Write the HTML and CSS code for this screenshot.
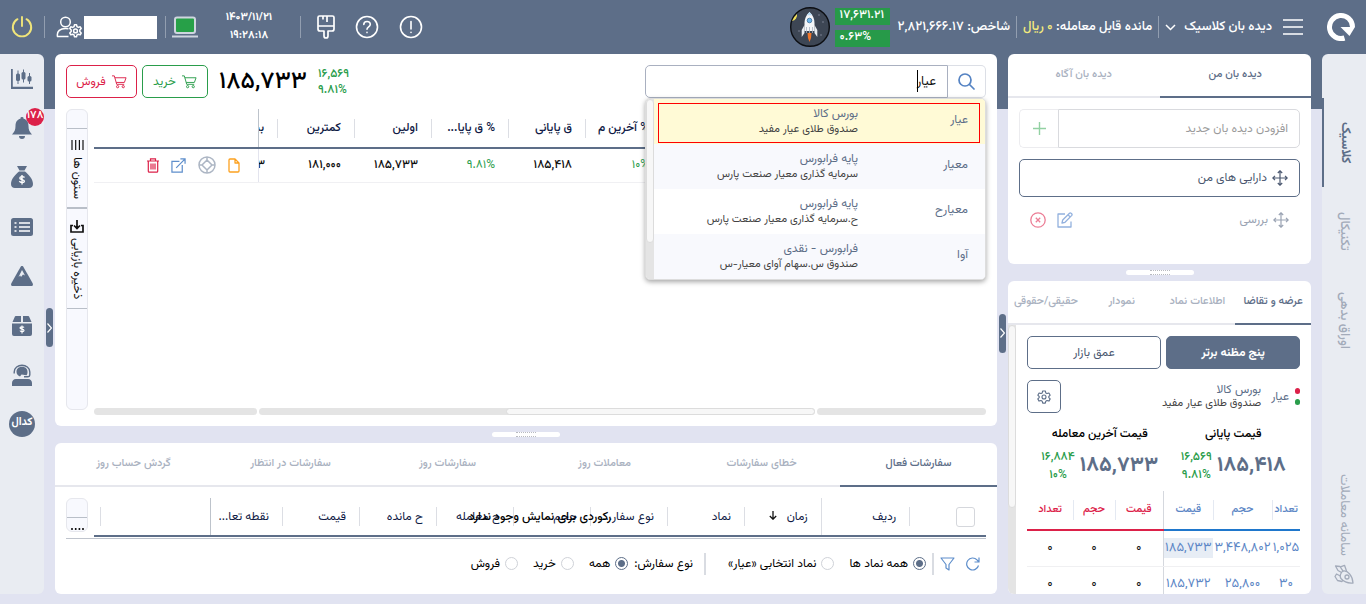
FILE: index.html
```html
<!DOCTYPE html>
<html lang="fa" dir="rtl">
<head>
<meta charset="utf-8">
<meta name="viewport" content="width=device-width, initial-scale=1">
<title>دیده بان کلاسیک</title>
<link rel="stylesheet" href="styles.css">
</head>
<body>
<header class="topbar">
  <svg class="logo" viewBox="0 0 28 28" width="28" height="28" aria-hidden="true"><path d="M25.500 14A11.500 11.500 0 1 0 17.500 25" fill="none" stroke="#fff" stroke-width="5"/><path d="M13.500 14H28l-5.500 9-4-4z" fill="#fff"/></svg>
  <button class="icon-btn menu-btn" aria-label="منو"><svg width="20" height="18" viewBox="0 0 20 18"><path d="M0 2h20M0 9h20M0 16h20" stroke="#fff" stroke-width="1.6"/></svg></button>
  <button class="view-select">دیده بان کلاسیک <svg width="11" height="7" viewBox="0 0 11 7"><path d="M1 1l4.500 4.500L10 1" fill="none" stroke="#fff" stroke-width="1.500"/></svg></button>
  <span class="vline"></span>
  <span class="top-text">مانده قابل معامله: <b class="gold">۰ ریال</b></span>
  <span class="vline"></span>
  <span class="top-text">شاخص: ۲,۸۲۱,۶۶۶.۱۷</span>
  <div class="index-badges"><span>۱۷,۶۳۱.۲۱</span><span>۰.۶۳%</span></div>
  <svg class="rocket-badge" width="40" height="40" viewBox="0 0 40 40" aria-hidden="true"><circle cx="20" cy="20" r="19.300" fill="#3d4654" stroke="#0c0e12" stroke-width="1.400"/><path d="M2 14a18 18 0 0 1 5-7 6 6 0 0 1-5 7z" fill="#f3e25b"/><g fill="#8d97a8"><circle cx="29" cy="8" r=".7"/><circle cx="33" cy="15" r=".7"/><circle cx="9" cy="24" r=".7"/><circle cx="31" cy="28" r=".7"/></g><path d="M19.500 5c-3.500 3-5 7-5 11v8h10v-8c0-4-1.500-8-5-11z" fill="#f4f6f8"/><path d="M19.500 5l-2.700 3.200h5.400z" fill="#b9dcf5"/><circle cx="19.500" cy="13.500" r="2.300" fill="#6fb7ea" stroke="#3b6f9b" stroke-width=".8"/><path d="M14.500 18l-2.800 5v7l2.800-4zM24.500 18l2.800 5v7l-2.800-4z" fill="#e8ebef"/><path d="M16.500 20v6M19.500 20v6M22.500 20v6" stroke="#a8b2c0" stroke-width=".8"/><path d="M17.500 26h4l-.5 5-1.500 4-1.500-4z" fill="#f0762a"/></svg>
  <span class="grow"></span>
  <button class="icon-btn" aria-label="هشدار"><svg width="24" height="24" viewBox="0 0 24 24" fill="none" stroke="#fff" stroke-width="1.600" stroke-linecap="round"><circle cx="12" cy="12" r="10.500"/><path d="M12 6.500v7.500M12 17.300v.2"/></svg></button>
  <button class="icon-btn help-btn" aria-label="راهنما"><svg width="24" height="24" viewBox="0 0 24 24" fill="none" stroke="#fff" stroke-width="1.600" stroke-linecap="round"><circle cx="12" cy="12" r="10.500"/><path d="M8.800 9.500c0-4 6.500-4 6.500-.2 0 2.600-3.300 2.400-3.300 4.900M12 17.400v.2"/></svg></button>
  <button class="icon-btn brush-btn" aria-label="پوسته"><svg width="18" height="24" viewBox="0 0 18 24" fill="none" stroke="#fff" stroke-width="1.700" stroke-linejoin="round"><path d="M2.500 1h13a1.500 1.500 0 0 1 1.500 1.500V14a2 2 0 0 1-2 2h-4v5a2 2 0 0 1-4 0v-5H3a2 2 0 0 1-2-2V2.500A1.500 1.500 0 0 1 2.500 1zM1 11h16M6 1v3.500M10 1v6"/></svg></button>
  <span class="vline"></span>
  <time class="clock"><span>۱۴۰۳/۱۱/۲۱</span><span>۱۹:۲۸:۱۸</span></time>
  <svg class="laptop" width="26" height="22" viewBox="0 0 26 22" aria-hidden="true"><rect x="3" y="1.500" width="20" height="15.500" rx="2" fill="#27a048" stroke="#cfd5df" stroke-width="2"/><path d="M0 20.500h26" stroke="#cfd5df" stroke-width="2"/></svg>
  <span class="vline"></span>
  <div class="account"><span class="name-plate"></span><button class="icon-btn" aria-label="حساب کاربری"><svg width="26" height="22" viewBox="0 0 26 22" fill="none" stroke="#fff" stroke-width="1.500" stroke-linejoin="round"><circle cx="9.500" cy="6" r="4.800"/><path d="M12.500 20.500H1.500c-1-5.500 3-8 8-8 1.300 0 2.200.1 3 .4"/><path d="M18.500 8.700h2l.5 2 1.300.7 1.900-.6 1 1.700-1.400 1.500v1.600l1.400 1.500-1 1.700-1.900-.6-1.300.7-.5 1.900h-2l-.5-1.900-1.300-.7-1.900.6-1-1.700 1.400-1.500V14l-1.400-1.500 1-1.700 1.900.6 1.300-.7z"/><circle cx="19.500" cy="14.900" r="1.900"/></svg></button></div>
  <span class="vline"></span>
  <button class="icon-btn power-btn" aria-label="خروج"><svg width="22" height="22" viewBox="0 0 22 22" fill="none" stroke="#f0e57a" stroke-width="1.900" stroke-linecap="round"><path d="M11 1v9M6.500 3.200a9.200 9.200 0 1 0 9 0"/></svg></button>
</header>

<div class="workspace">
  <nav class="mode-rail" aria-label="نماها">
    <a href="#" class="mode active">کلاسیک</a>
    <a href="#" class="mode">تکنیکال</a>
    <a href="#" class="mode">اوراق بدهی</a>
    <a href="#" class="mode system"><span>سامانه معاملات</span><svg width="20" height="20" viewBox="0 0 20 20" fill="none" stroke="#a3abba" stroke-width="1.300" stroke-linejoin="round"><path d="M19 19c-5 .5-9-1-12-4.500C5.500 12.500 6.500 8 9.500 7c4-.5 9 4 9.500 12z"/><circle cx="13" cy="13" r="2"/><path d="M9 7.200L6 2.500 1.500 2l2.500 4.500 3.500 2M6.300 12L2.500 10 1 12.500l2.500 4 4.500 1 1-1.500M6.500 2.800l4-1.500 2 5.700"/></svg></a>
  </nav>

  <aside class="watch-column">
    <section class="panel watch-panel">
      <div class="tabs"><button class="tab active">دیده بان من</button><button class="tab">دیده بان آگاه</button></div>
      <div class="watch-body">
        <div class="add-watch"><input type="text" placeholder="افزودن دیده بان جدید" aria-label="افزودن دیده بان جدید"><button aria-label="افزودن"><svg width="13" height="13" viewBox="0 0 13 13"><path d="M6.500 0v13M0 6.500h13" stroke="#93d1a3" stroke-width="1.400"/></svg></button></div>
        <div class="watch-item selected"><svg class="move" width="16" height="16" viewBox="0 0 16 16"><path d="M8 1v14M1 8h14M5.800 3L8 .8 10.200 3M5.800 13L8 15.200l2.200-2.200M3 5.800L.8 8 3 10.200M13 5.800L15.200 8 13 10.200"/></svg><span>دارایی های من</span></div>
        <div class="watch-item"><svg class="move" width="16" height="16" viewBox="0 0 16 16"><path d="M8 1v14M1 8h14M5.800 3L8 .8 10.200 3M5.800 13L8 15.200l2.200-2.200M3 5.800L.8 8 3 10.200M13 5.800L15.200 8 13 10.200"/></svg><span>بررسی</span><span class="grow"></span>
          <button class="icon-btn" aria-label="ویرایش"><svg width="16" height="16" viewBox="0 0 16 16" fill="none" stroke="#93b1de" stroke-width="1.300" stroke-linejoin="round"><path d="M8 2H1v13h13V9.500M5 11l.7-3L12.500 1.200c1-1 3.300 1 2.300 2.200L8 10.300zM11 2.800l2.300 2.300"/></svg></button>
          <button class="icon-btn" aria-label="حذف"><svg width="16" height="16" viewBox="0 0 16 16" fill="none" stroke="#ec7e96" stroke-width="1.300"><circle cx="8" cy="8" r="7.200"/><path d="M5.800 5.800l4.400 4.400M10.200 5.800l-4.400 4.400"/></svg></button></div>
      </div>
    </section>
    <div class="splitter"><span></span></div>
    <section class="panel depth-panel">
      <div class="tabs"><button class="tab active">عرضه و تقاضا</button><button class="tab">اطلاعات نماد</button><button class="tab">نمودار</button><button class="tab">حقیقی/حقوقی</button></div>
      <div class="depth-scroll">
        <div class="depth-body">
          <div class="depth-modes"><button class="mode-btn filled">پنج مظنه برتر</button><button class="mode-btn">عمق بازار</button></div>
          <div class="symbol-row">
            <span class="dots"><i class="dot-red"></i><i class="dot-green"></i></span>
            <span class="symbol">عیار</span>
            <span class="symbol-name"><span>بورس کالا</span><span class="fund">صندوق طلای عیار مفید</span></span>
            <span class="grow"></span>
            <button class="gear-btn" aria-label="تنظیمات"><svg width="14" height="14" viewBox="0 0 14 14" fill="none" stroke="#5d6e88" stroke-width="1.100" stroke-linejoin="round"><path d="M5.700 1h2.600l.5 1.900 1.200.7 1.900-.6 1.300 2.200L11.800 6.500v1.100l1.400 1.300-1.300 2.200-1.900-.6-1.200.7-.5 1.900H5.700l-.5-1.900-1.200-.7-1.900.6L.8 8.900l1.400-1.300V6.500L.8 5.200 2.100 3l1.900.6 1.200-.7z"/><circle cx="7" cy="7" r="2"/></svg></button>
          </div>
          <div class="prices">
            <div class="price-cell"><h3>قیمت پایانی</h3><div><strong>۱۸۵,۴۱۸</strong><span class="delta"><span>۱۶,۵۶۹</span><span>۹.۸۱%</span></span></div></div>
            <div class="price-cell"><h3>قیمت آخرین معامله</h3><div><strong>۱۸۵,۷۳۳</strong><span class="delta"><span>۱۶,۸۸۴</span><span>۱۰%</span></span></div></div>
          </div>
          <div class="books">
            <table class="book buy">
              <colgroup><col class="c-count"><col class="c-vol"><col></colgroup>
              <thead><tr><th>تعداد</th><th>حجم</th><th>قیمت</th></tr></thead>
              <tbody><tr><td>۱,۰۲۵</td><td>۳,۴۴۸,۸۰۲</td><td><mark>۱۸۵,۷۳۳</mark></td></tr><tr><td>۳۰</td><td>۲۵,۸۰۰</td><td>۱۸۵,۷۳۲</td></tr></tbody>
            </table>
            <table class="book sell">
              <colgroup><col class="c-price"><col class="c-svol"><col></colgroup>
              <thead><tr><th>قیمت</th><th>حجم</th><th>تعداد</th></tr></thead>
              <tbody><tr><td>۰</td><td>۰</td><td>۰</td></tr><tr><td>۰</td><td>۰</td><td>۰</td></tr></tbody>
            </table>
          </div>
        </div>
        <div class="vscroll"><span></span></div>
      </div>
    </section>
  </aside>

  <div class="gutter low"><button class="fold" aria-label="جمع کردن ستون"><svg width="5" height="10" viewBox="0 0 5 10"><path d="M.5.5l4 4.500-4 4.500" fill="none" stroke="#fff" stroke-width="1.200"/></svg></button></div>

  <main class="center">
    <section class="panel market">
      <div class="market-bar">
        <div class="search">
          <button class="search-btn" aria-label="جستجو"><svg width="17" height="17" viewBox="0 0 17 17" fill="none" stroke="#5583c3" stroke-width="1.700" stroke-linecap="round"><circle cx="7" cy="7" r="6"/><path d="M11.500 11.500l4.500 4.500"/></svg></button>
          <input type="text" value="عیار" aria-label="جستجوی نماد"><span class="caret"></span>
          <div class="suggest">
            <ul>
              <li class="hot"><span>عیار</span><span class="about"><em>بورس کالا</em><small>صندوق طلای عیار مفید</small></span></li>
              <li><span>معیار</span><span class="about"><em>پایه فرابورس</em><small>سرمایه گذاری معیار صنعت پارس</small></span></li>
              <li><span>معیارح</span><span class="about"><em>پایه فرابورس</em><small>ح.سرمایه گذاری معیار صنعت پارس</small></span></li>
              <li><span>آوا</span><span class="about"><em>فرابورس - نقدی</em><small>صندوق س.سهام آوای معیار-س</small></span></li>
            </ul>
            <div class="vscroll"><span></span></div>
          </div>
        </div>
        <span class="grow"></span>
        <span class="delta"><span>۱۶,۵۶۹</span><span>۹.۸۱%</span></span>
        <strong class="last-price">۱۸۵,۷۳۳</strong>
        <button class="trade buy-btn"><svg width="15" height="15" viewBox="0 0 16 15" fill="none" stroke="currentColor" stroke-width="1"><path d="M0 1.500h2.500L5 10.500h8M3 3.500h12l-1.800 5H4.500"/><circle cx="6" cy="13" r="1.200"/><circle cx="12" cy="13" r="1.200"/></svg>خرید</button>
        <button class="trade sell-btn"><svg width="15" height="15" viewBox="0 0 16 15" fill="none" stroke="currentColor" stroke-width="1"><path d="M0 1.500h2.500L5 10.500h8M3 3.500h12l-1.800 5H4.500"/><circle cx="6" cy="13" r="1.200"/><circle cx="12" cy="13" r="1.200"/></svg>فروش</button>
      </div>
      <div class="grid-area">
        <div class="grid-main">
          <table class="quotes">
            <colgroup><col class="q-pin"><col><col><col><col><col><col><col><col class="q-cut"><col class="q-act"></colgroup>
            <thead><tr><th></th><th></th><th></th><th><span>% آخرین م</span></th><th><span>ق پایانی</span></th><th><span>% ق پایا...</span></th><th><span>اولین</span></th><th><span>کمترین</span></th><th class="cut"><span>بیشترین</span></th><th class="pin"></th></tr></thead>
            <tbody><tr><td></td><td></td><td></td><td class="up"><span>۱۰%</span></td><td><span>۱۸۵,۴۱۸</span></td><td class="up"><span>۹.۸۱%</span></td><td><span>۱۸۵,۷۳۳</span></td><td><span>۱۸۱,۰۰۰</span></td><td class="cut"><span>۱۸۵,۷۳۳</span></td>
              <td class="pin"><div class="row-actions">
                <button class="icon-btn" aria-label="یادداشت"><svg width="12" height="15" viewBox="0 0 12 15" fill="none" stroke="#fca120" stroke-width="1.300" stroke-linejoin="round"><path d="M2 1h5l4 4v8a1 1 0 0 1-1 1H2a1 1 0 0 1-1-1V2a1 1 0 0 1 1-1zM7 1v4h4"/></svg></button>
                <button class="icon-btn" aria-label="پرتفوی"><svg width="18" height="18" viewBox="0 0 18 18" fill="none" stroke="#adb6c4" stroke-width="1.500"><circle cx="9" cy="9" r="8"/><path d="M9 4l5 5-5 5-5-5zM9 1v3M9 14v3M1 9h3M14 9h3"/></svg></button>
                <button class="icon-btn" aria-label="باز کردن"><svg width="15" height="15" viewBox="0 0 16 16" fill="none" stroke="#5e8ecb" stroke-width="1.300"><path d="M9 3.500H1V15h11V7.500M5.500 10.500L14.500 1.500M10 1h5v5"/></svg></button>
                <button class="icon-btn" aria-label="حذف نماد"><svg width="12" height="15" viewBox="0 0 12 15" fill="none" stroke="#dc2149" stroke-width="1.200"><path d="M0 3h12M3.500 3V.8h5V3M1.300 3v10.200c0 .6.400 1 1 1h7.400c.6 0 1-.4 1-1V3M4 5.500v6M6 5.500v6M8 5.500v6"/></svg></button>
              </div></td></tr></tbody>
          </table>
          <div class="hscroll"><span class="h-pin"></span><span class="h-mid"><i></i></span><span class="h-act"></span></div>
        </div>
        <div class="tool-rail">
          <button class="tool-btn cols-btn"><svg width="13" height="10" viewBox="0 0 13 10"><path d="M1 0v10M4.700 0v10M8.400 0v10M12 0v10" stroke="#111" stroke-width="1.200"/></svg><span>ستون ها</span></button>
          <button class="tool-btn save-btn"><svg width="14" height="13" viewBox="0 0 14 13" fill="none" stroke="#111" stroke-width="1.700"><path d="M3 5.500H1V12h12V5.500h-2M7 0v8M4 5.500l3 3 3-3"/></svg><span>ذخیره بازیابی</span></button>
        </div>
      </div>
    </section>
    <div class="splitter"><span></span></div>
    <section class="panel orders">
      <div class="tabs"><button class="tab active">سفارشات فعال</button><button class="tab">خطای سفارشات</button><button class="tab">معاملات روز</button><button class="tab">سفارشات روز</button><button class="tab">سفارشات در انتظار</button><button class="tab">گردش حساب روز</button></div>
      <div class="orders-grid">
        <div class="orders-main">
          <table class="quotes order-table">
            <colgroup><col><col class="o-row"><col><col><col><col><col><col><col><col class="o-cut"><col class="o-act"></colgroup>
            <thead><tr><th class="check"><input type="checkbox" aria-label="انتخاب همه"></th><th class="pin-right"><span>ردیف</span></th><th><span>زمان <svg width="8" height="9" viewBox="0 0 8 9" fill="none" stroke="#111" stroke-width="1.300"><path d="M4 0v8M.8 5l3.200 3.200L7.200 5"/></svg></span></th><th><span>نماد</span></th><th><span>نوع سفار...</span></th><th><span>حجم</span></th><th><span>ح معامله</span></th><th><span>ح مانده</span></th><th><span>قیمت</span></th><th class="cut"><span>نقطه تعا...</span></th><th class="pin act"></th></tr></thead>
          </table>
          <p class="empty-note">رکوردی برای نمایش وجود ندارد</p>
        </div>
        <div class="tool-rail mini"><button class="tool-btn" aria-label="ستون ها"><svg width="13" height="2" viewBox="0 0 13 2"><path d="M1 0v2M4.700 0v2M8.400 0v2M12 0v2" stroke="#111" stroke-width="1.600"/></svg></button></div>
      </div>
      <form class="filters">
        <button type="button" class="icon-btn" aria-label="بازخوانی"><svg width="14" height="14" viewBox="0 0 14 14" fill="none" stroke="#5e8ecb" stroke-width="1.200"><path d="M12.500 8.500A6 6 0 1 1 11 2.800L13 5M13 .5V5H8.500"/></svg></button>
        <button type="button" class="icon-btn" aria-label="فیلتر"><svg width="15" height="14" viewBox="0 0 15 14" fill="none" stroke="#5e8ecb" stroke-width="1.200" stroke-linejoin="round"><path d="M1 1h13L9 7.500V13l-3-2V7.500z"/></svg></button>
        <span class="sep"></span>
        <label><input type="radio" name="scope" checked>همه نماد ها</label>
        <label class="second"><input type="radio" name="scope">نماد انتخابی «عیار»</label>
        <span class="sep wide"></span>
        <span>نوع سفارش:</span>
        <label><input type="radio" name="side" checked>همه</label>
        <label class="second"><input type="radio" name="side">خرید</label>
        <label class="second"><input type="radio" name="side">فروش</label>
      </form>
    </section>
  </main>

  <div class="gutter"><button class="fold" aria-label="باز کردن منو"><svg width="5" height="10" viewBox="0 0 5 10"><path d="M.5.5l4 4.500-4 4.500" fill="none" stroke="#fff" stroke-width="1.200"/></svg></button></div>

  <nav class="icon-rail" aria-label="ابزارها">
    <div class="rail-items">
      <a href="#" aria-label="نمودار"><svg width="22" height="20" viewBox="0 0 22 20" fill="#5d6e88"><path d="M0 0h1.800v17.800H22V20H0z"/><rect x="5" y="4.500" width="4" height="7.500" rx="1.500"/><rect x="10.500" y="3" width="4" height="7.500" rx="1.500"/><rect x="16.500" y="7" width="4" height="5.500" rx="1.500"/><path d="M6.500 1.500h1v13.500h-1zM12 .5h1v13h-1zM18 4h1v11h-1z"/></svg></a>
      <a href="#" aria-label="پیام ها" class="bell"><svg width="20" height="22" viewBox="0 0 20 22" fill="#5d6e88"><path d="M10 0a1.500 1.500 0 0 1 1.500 1.800C15 2.500 16.500 5.500 16.500 9c0 4 1 5.500 3.500 8.500H0C2.500 14.500 3.500 13 3.500 9c0-3.500 1.500-6.500 5-7.200A1.500 1.500 0 0 1 10 0zM7 19h6a3 3 0 0 1-6 0z"/></svg><b>۱۷۸</b></a>
      <a href="#" aria-label="سرمایه"><svg width="22" height="22" viewBox="0 0 22 22"><path d="M6 0h10l-2.500 4.500h-5zM8 5.500h6c4 3.500 8 7.500 8 12.500 0 2.500-1.500 4-4 4H4c-2.500 0-4-1.500-4-4C0 13 4 9 8 5.500z" fill="#5d6e88"/><path d="M13.500 11.500c-.5-1-4.500-1.500-4.700.5-.2 2 4.700 1.200 4.600 3.200-.1 1.900-4.200 1.800-5-.1M11 9v9.500" fill="none" stroke="#fff" stroke-width="1.400"/></svg></a>
      <a href="#" aria-label="فهرست"><svg width="22" height="18" viewBox="0 0 22 18"><rect width="22" height="18" rx="2.500" fill="#5d6e88"/><path d="M3.500 5h2M8 5h11M3.500 9h2M8 9h11M3.500 13h2M8 13h11" stroke="#fff" stroke-width="1.500"/></svg></a>
      <a href="#" aria-label="قله"><svg width="22" height="20" viewBox="0 0 22 20"><path d="M11 0c.8 0 1.200.5 1.600 1.200L21.500 17c1 1.800.2 3-1.500 3H2c-1.700 0-2.500-1.200-1.500-3L9.400 1.200C9.800.5 10.200 0 11 0z" fill="#5d6e88"/><path d="M11 4l3 5.500-2-1-2 2.500-.8-1.500L7.500 11z" fill="#e9ecf2"/></svg></a>
      <a href="#" aria-label="بسته"><svg width="20" height="20" viewBox="0 0 20 20"><path d="M4 0h5v6H.5L2.500 1.500C2.800.5 3.200 0 4 0zM11 0h5c.8 0 1.200.5 1.500 1.500l2 4.500H11zM0 7.500h20V18a2 2 0 0 1-2 2H2a2 2 0 0 1-2-2z" fill="#5d6e88"/><path d="M12 11.500c-.5-1-4-1-4 .5s4 .9 4 2.400-3.500 1.500-4 .2M10 9.500v8" fill="none" stroke="#fff" stroke-width="1.200"/></svg></a>
      <a href="#" aria-label="پشتیبانی"><svg width="20" height="22" viewBox="0 0 20 22"><path d="M2.200 9.500V8c0-9 15.600-9 15.600 0v3c0 1-.8 1.700-1.800 1.700H12" fill="none" stroke="#5d6e88" stroke-width="1.400"/><path d="M10 2.800c3.500 0 5.500 2.200 5.500 5.200 0 1.500-.4 2.600-1 3.300l-5-.8-1.500 2C6 11.700 4.500 10 4.500 8c0-3 2-5.200 5.500-5.200zM4 15h12c2.500 0 4 2 4 4v3H0v-3c0-2 1.500-4 4-4z" fill="#5d6e88"/></svg></a>
      <a href="#" class="codal"><span>کدال</span></a>
    </div>
  </nav>
</div>
</body>
</html>
```
FILE: styles.css
```css
:root {
  --slate: #5d6e88;
  --lavender: #e1e3f1;
  --rail: #e9ecf2;
  --muted: #a9b1c0;
  --line: #e6e7ed;
  --green: #2a9d4b;
  --red: #dc2149;
  --blue: #5c86c5;
  --ink: #101a45;
  font-family: "Vazirmatn", "DejaVu Sans", sans-serif;
}
* { box-sizing: border-box; }
body {
  margin: 0;
  height: 100vh;
  display: flex;
  flex-direction: column;
  overflow: hidden;
  font-size: 12px;
  font-weight: 400;
  line-height: 14px;
  color: #111;
  background: linear-gradient(var(--slate) 109px, var(--lavender) 109px);
}
button, input { font: inherit; color: inherit; }
button { border: 0; padding: 0; background: none; cursor: pointer; }
a { color: inherit; text-decoration: none; }
svg { display: block; flex: none; }
.grow { flex: 1; }
.icon-btn { display: flex; }

/* Top bar */
.topbar {
  flex: none;
  display: flex;
  align-items: center;
  height: 54px;
  padding: 0 11px;
  color: #fff;
  font-size: 13px;
  font-weight: 500;
  white-space: nowrap;
}
.logo { margin-left: 24px; }
.menu-btn { margin-left: 11px; }
.view-select { display: flex; align-items: center; gap: 8px; }
.vline { width: 1px; height: 22px; margin: 0 6px; background: #929eb0; }
.gold { color: #f5ea7d; font-weight: 500; }
.index-badges { display: flex; flex-direction: column; gap: 5px; margin: 0 8px 0 5px; font-size: 12px; }
.index-badges span { width: 55px; height: 17px; padding: 0 5px; line-height: 15px; background: #279a49; direction: ltr; }
.help-btn { margin: 0 20px; }
.brush-btn { margin-left: 10px; }
.clock { display: flex; flex-direction: column; gap: 4px; width: 96px; padding-left: 6px; text-align: center; font-size: 11px; font-weight: 700; }
.account { display: flex; align-items: center; gap: 2px; margin: 0 2px 0 5px; }
.name-plate { width: 73px; height: 23px; background: #fff; }
.power-btn { margin-right: 5px; }

/* Page frame */
.workspace { flex: 1; min-height: 0; display: flex; padding-bottom: 10px; }
.panel { background: #fff; border-radius: 6px; }
.tabs { display: flex; flex: none; height: 44px; }
.tab { flex: 1 1 0; min-width: 0; font-size: 11px; font-weight: 500; white-space: nowrap; border-bottom: 2px solid var(--line); color: var(--muted); }
.tab.active { color: var(--slate); border-color: var(--slate); }
.splitter { flex: none; height: 17px; display: flex; align-items: center; justify-content: center; }
.splitter span { width: 68px; height: 5px; border-radius: 3px; background: #fff; display: flex; align-items: center; justify-content: center; }
.splitter span::after { content: ""; width: 20px; height: 3px; border: 1px dotted #b8bac0; border-width: 1px 0; }
.gutter { width: 11px; flex: none; display: flex; align-items: center; justify-content: center; padding-top: 7px; }
.gutter.low { padding-top: 18px; }
.fold { width: 7px; height: 39px; border-radius: 4px; background: var(--slate); display: flex; align-items: center; justify-content: center; }

/* Right rail */
.mode-rail { flex: none; width: 44px; margin-left: 11px; padding-top: 44px; display: flex; flex-direction: column; background: var(--rail); border-radius: 6px 0 0 6px; }
.mode { height: 89px; display: flex; flex-direction: column; align-items: center; justify-content: center; writing-mode: vertical-rl; white-space: nowrap; color: #a3abba; font-size: 13px; font-weight: 500; }
.mode.active { color: var(--slate); font-weight: 700; border-left: 2px solid var(--slate); }
.mode.system { writing-mode: horizontal-tb; gap: 8px; height: auto; margin-top: auto; padding-bottom: 10px; font-weight: 400; }
.mode.system span { writing-mode: vertical-rl; }

/* Watch lists */
.watch-column { flex: none; width: 303px; display: flex; flex-direction: column; }
.watch-panel { flex: none; padding-bottom: 22px; }
.watch-body { padding: 11px 11px 0; }
.add-watch { display: flex; height: 39px; margin-bottom: 11px; }
.add-watch input { flex: 1; min-width: 0; padding: 0 11px; border: 1px solid #d9dade; border-radius: 0 5px 5px 0; outline: 0; }
.add-watch input::placeholder { color: #9b9b9b; opacity: 1; }
.add-watch button { width: 39px; display: flex; align-items: center; justify-content: center; border: 1px solid #ececef; border-right: 0; border-radius: 5px 0 0 5px; }
.watch-item { display: flex; align-items: center; gap: 5px; height: 38px; padding: 0 11px; color: #9aa3b3; }
.watch-item + .watch-item { height: 45px; }
.watch-item.selected { border: 1px solid var(--slate); border-radius: 5px; color: #4b5870; }
.watch-item .icon-btn + .icon-btn { margin-right: 6px; }
.move { fill: none; stroke: currentColor; stroke-width: 1.2px; }

/* Market depth */
.depth-panel { flex: 1; min-height: 0; display: flex; flex-direction: column; overflow: hidden; }
.depth-scroll { flex: 1; min-height: 0; display: flex; overflow: hidden; }
.vscroll { flex: none; width: 8px; background: #e4e4e4; }
.vscroll span { display: block; height: 68%; background: #f7f7f7; border: 1px solid #dcdcdc; border-radius: 4px; }
.depth-body { flex: 1; min-width: 0; padding: 11px; }
.depth-modes { display: flex; gap: 5px; margin-bottom: 11px; }
.mode-btn { flex: 1; height: 33px; border: 1px solid var(--slate); border-radius: 5px; color: #4b5870; }
.mode-btn.filled { background: var(--slate); color: #fff; font-weight: 700; }
.symbol-row { display: flex; align-items: center; color: var(--slate); height: 33px; margin-bottom: 13px; white-space: nowrap; }
.dots { display: flex; flex-direction: column; gap: 5px; margin-left: 6px; }
.dots i { width: 5px; height: 6px; border-radius: 3px; }
.dot-red { background: var(--red); }
.dot-green { background: var(--green); }
.symbol { margin-left: 10px; }
.symbol-name { display: flex; flex-direction: column; }
.fund { color: #444; font-size: 11px; }
.gear-btn { width: 34px; height: 33px; display: flex; align-items: center; justify-content: center; border: 1px solid var(--slate); border-radius: 5px; }
.prices { display: grid; grid-template-columns: 1fr 1fr; padding-left: 6px; }
.price-cell h3 { margin: 0 0 6px; font-size: 12px; line-height: 16px; font-weight: 500; text-align: center; color: #000; white-space: nowrap; }
.price-cell > div { display: flex; align-items: center; justify-content: center; gap: 5px; }
.price-cell strong { font-size: 21px; line-height: 28px; color: var(--slate); }
.delta { display: flex; flex-direction: column; text-align: center; color: var(--green); font-weight: 500; line-height: 18px; }
.books { display: grid; grid-template-columns: 1fr 1fr; margin-top: 7px; }
.book { width: 100%; table-layout: fixed; border-collapse: collapse; font-size: 13px; }
.book th { height: 39px; padding: 0; font-size: 11px; font-weight: 500; border-bottom: 2px solid #1f77cc; background: linear-gradient(#e4e9f2, #e4e9f2) left center / 1px 20px no-repeat; }
.book th:last-child { background: none; }
.book td { height: 36px; padding: 0; text-align: center; border-bottom: 1px solid #f0f0f2; white-space: nowrap; }
.buy { color: var(--blue); }
.sell th { color: var(--red); border-color: var(--red); }
.sell { border-right: 1px solid #d5d8de; }
.c-count { width: 28px; }
.c-vol { width: 59px; }
.c-price { width: 48px; }
.c-svol { width: 42px; }
.book mark { display: block; color: inherit; background: #e7edf5; line-height: 20px; }

/* Quotes */
.center { flex: 1; min-width: 0; display: flex; flex-direction: column; }
.market { flex: 1; min-height: 0; display: flex; flex-direction: column; padding: 11px; }
.market-bar { display: flex; align-items: center; height: 33px; flex: none; }
.market-bar .delta { margin-left: 11px; text-align: left; line-height: 16px; }
.last-price { margin-left: 11px; font-size: 24px; line-height: 30px; font-weight: 500; color: #000; }
.trade { display: flex; align-items: center; justify-content: center; gap: 6px; width: 66px; height: 33px; border: 1px solid currentColor; border-radius: 5px; }
.buy-btn { color: var(--green); }
.sell-btn { width: 71px; margin-right: 5px; color: var(--red); }
.search { position: relative; display: flex; width: 341px; height: 33px; }
.search-btn { width: 38px; display: flex; align-items: center; justify-content: center; border: 1px solid #dcdfe6; border-left: 0; border-radius: 0 5px 5px 0; }
.search input { flex: 1; min-width: 0; padding: 0 11px; font-size: 13px; border: 1px solid #a9b0c0; border-radius: 5px 0 0 5px; outline: 0; background: #fff; }
.caret { position: absolute; right: 68px; top: 5px; width: 1px; height: 22px; background: #000; }
.suggest { position: absolute; z-index: 5; top: 33px; right: 0; left: 0; display: flex; overflow: hidden; border-radius: 5px; background: #fff; border: 1px solid #ddd; box-shadow: 0 2px 5px rgba(0, 0, 0, .35); }
.suggest ul { flex: 1; margin: 0; padding: 0; list-style: none; }
.suggest li { position: relative; display: grid; grid-template-columns: 110px 1fr; align-items: center; height: 45px; padding: 0 17px 3px; color: var(--slate); }
.suggest li:nth-child(even) { background: #f8f9fd; }
.suggest .hot { background: #fffad6; }
.suggest .hot::after { content: ""; position: absolute; inset: 4px 5px 1px 4px; border: 1px solid #f00; }
.suggest .about { padding-top: 3px; }
.suggest em, .suggest small { display: block; font-style: normal; font-size: 12px; line-height: 15px; }
.suggest small { color: #444; font-size: 11px; }
.suggest .vscroll span { height: 80%; }

.grid-area { flex: 1; min-height: 0; display: flex; gap: 6px; margin-top: 11px; padding-bottom: 5px; }
.grid-main { flex: 1; min-width: 0; display: flex; flex-direction: column; }
.quotes { width: 100%; table-layout: fixed; border-collapse: collapse; }
.quotes th { height: 39px; padding: 0 13px; color: var(--ink); font-weight: 500; text-align: right; border-bottom: 2px solid var(--slate); background: linear-gradient(#dcdee4, #dcdee4) left center / 1px 19px no-repeat; white-space: nowrap; }
.quotes td { height: 34px; padding: 0 13px; font-weight: 500; text-align: right; border-bottom: 1px solid #f0f0f3; }
.quotes span { display: block; }
.quotes .cut { overflow: hidden; background: none; border-left: 1px solid #bdc3cb; padding-left: 0; }
.quotes td.cut { border-left-color: #e3e4ee; }
.quotes .pin { background: none; padding: 0; }
.q-pin { width: 170px; }
.q-cut { width: 19px; }
.q-act { width: 164px; }
.quotes .up { color: var(--green); font-weight: 400; }
.row-actions { display: flex; align-items: center; gap: 12px; padding-right: 18px; }
.hscroll { display: flex; gap: 2px; margin-top: auto; margin-bottom: -5px; }
.hscroll > span { height: 7px; border-radius: 4px; background: #e4e4e4; }
.h-pin { width: 169px; }
.h-mid { flex: 1; }
.h-act { width: 163px; }
.h-mid i { display: block; width: 309px; height: 7px; border: 1px solid #dcdcdc; border-radius: 4px; background: #f7f7f7; }
.tool-rail { flex: none; width: 22px; padding-top: 18px; border: 1px solid var(--line); border-radius: 6px; background: #f8f9fe; overflow: hidden; }
.tool-btn { width: 100%; display: flex; flex-direction: column; align-items: center; gap: 7px; padding-top: 11px; border-top: 1px solid #b9bfc8; }
.tool-btn span { writing-mode: vertical-rl; white-space: nowrap; }
.cols-btn { height: 79px; }
.save-btn { height: 102px; gap: 5px; border-top-width: 2px; border-bottom: 1px solid #b9bfc8; }

/* Orders */
.orders { flex: none; height: 151px; }
.orders-grid { display: flex; gap: 6px; height: 41px; margin: 11px 11px 0; border-bottom: 1px solid #bfc4cd; }
.orders-main { position: relative; flex: 1; min-width: 0; }
.order-table th { height: 38px; font-weight: 400; }
.order-table .pin-right { border-left: 1px solid #dcdee4; background: none; }
.order-table .check { padding: 0 11px; }
.order-table input { appearance: none; display: block; width: 19px; height: 20px; margin: 0; border: 1px solid #d5d7dc; border-radius: 3px; }
.order-table svg { display: inline-block; margin-right: 6px; }
.o-row { width: 88px; }
.o-cut { width: 72px; }
.o-act { width: 116px; }
.quotes .act { background: linear-gradient(#dcdee4, #dcdee4) 6px center / 1px 19px no-repeat; }
.empty-note { position: absolute; inset: 0 0 auto; margin: 0; font-weight: 500; line-height: 38px; text-align: center; color: #000; }
.mini { height: 34px; }
.mini .tool-btn { padding-top: 10px; }
.filters { display: flex; align-items: center; height: 25px; margin-top: 12px; padding: 0 17px; white-space: nowrap; color: #000; }
.filters .icon-btn + .icon-btn { margin-right: 11px; }
.filters label { display: flex; align-items: center; gap: 5px; margin-right: 6px; }
.filters .second { margin-right: 15px; }
.filters input { appearance: none; width: 13px; height: 13px; margin: 0; border: 1px solid #cfd2d8; border-radius: 50%; }
.filters input:checked { border-color: var(--slate); background: radial-gradient(circle, var(--slate) 3px, transparent 4px); }
.sep { width: 2px; height: 22px; margin-right: 6px; background: #d9dce2; }
.sep.wide { margin: 0 22px 0 11px; }

/* Left rail */
.icon-rail { flex: none; width: 44px; background: var(--rail); border-radius: 0 6px 6px 0; }
.rail-items { display: flex; flex-direction: column; height: 395px; }
.rail-items a { position: relative; flex: 1; display: flex; align-items: center; justify-content: center; }
.bell b { position: absolute; top: 5px; right: 0; width: 18px; height: 18px; border-radius: 50%; background: var(--red); color: #fff; font-size: 11px; font-weight: 600; line-height: 15px; text-align: center; }
.codal span { width: 26px; height: 26px; border-radius: 50%; background: var(--slate); color: #fff; font-size: 11px; font-weight: 700; line-height: 24px; text-align: center; }
```
